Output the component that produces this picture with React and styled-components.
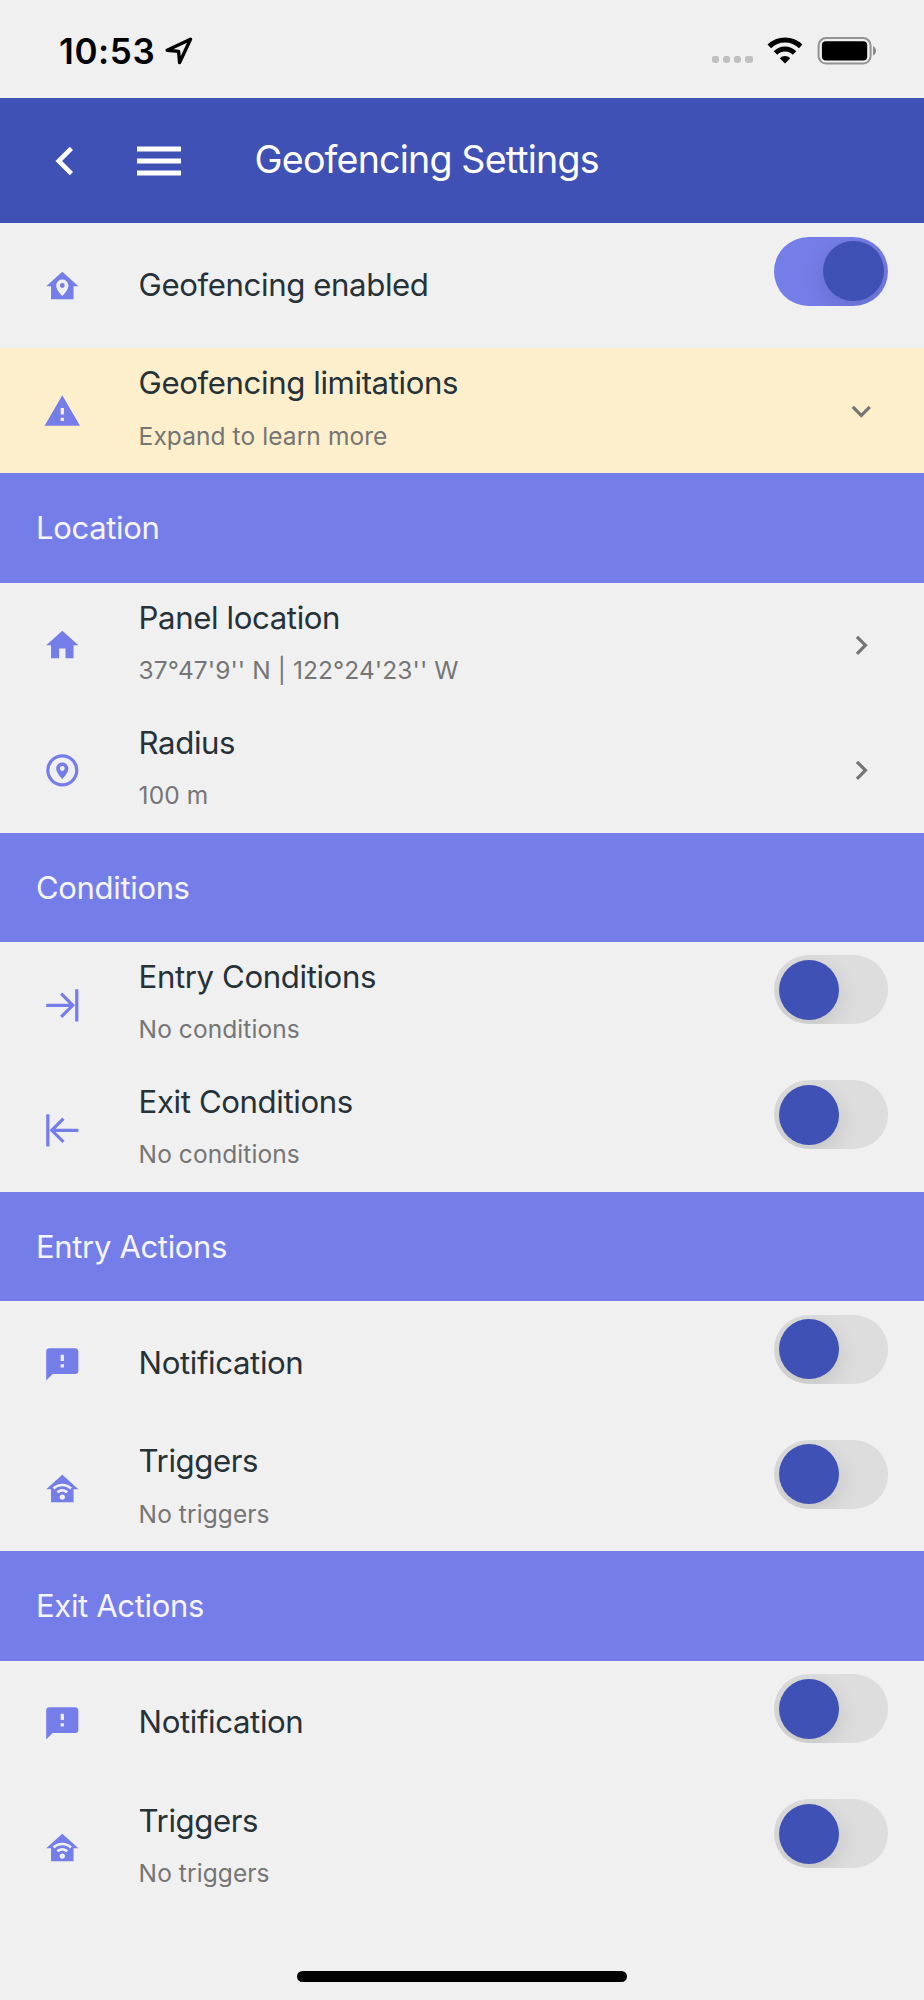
import React from 'react'
import styled, { createGlobalStyle } from 'styled-components'

const GlobalStyle = createGlobalStyle`
  * {
    box-sizing: border-box;
  }
  body {
    margin: 0;
    background-color: #f0f0f0;
    font-family: Inter, "Liberation Sans", sans-serif;
  }
`

const Container = styled.div`
  width: 924px;
  height: 2000px;
  display: flex;
  flex-direction: column;
  overflow: hidden;
  background-color: #f0f0f0;
`

const StatusBar = styled.div`
  height: 98.2px;
  flex-shrink: 0;
  display: flex;
  align-items: center;
  justify-content: space-between;
  padding: 3px 47px 0 59px;
`

const StatusGroup = styled.div`
  display: flex;
  align-items: center;
`

const Time = styled.span`
  font-size: 35px;
  font-weight: 600;
  line-height: 40px;
  letter-spacing: 0.6px;
  color: #000;
  margin-right: 9.5px;
`

const Signal = styled.div`
  display: flex;
  gap: 3.4px;
  margin: 18px 14.5px 0 0;
`

const SignalDot = styled.span`
  width: 7.7px;
  height: 7.3px;
  border-radius: 2.4px;
  background-color: #c0c0c0;
`

const Header = styled.header`
  height: 125px;
  flex-shrink: 0;
  display: flex;
  align-items: center;
  padding-left: 55px;
  background-color: #3f51b5;
`

const HeaderTitle = styled.h1`
  margin: 0 0 1px 74px;
  font-size: 37.6px;
  font-weight: 400;
  line-height: 48px;
  letter-spacing: -0.82px;
  color: #fff;
`

const SectionTitle = styled.h2`
  height: 109.36px;
  flex-shrink: 0;
  margin: 0;
  padding-left: 36px;
  font-size: 31px;
  font-weight: 400;
  line-height: 109px;
  letter-spacing: -0.33px;
  color: #f5f5fb;
  background-color: #757de8;
`

const Row = styled.div`
  height: 125px;
  flex-shrink: 0;
  display: flex;
  align-items: center;
  padding: 0 36px 0 43px;
  background-color: ${props => props.$warning ? "#feefcc" : "transparent"};
`

const RowIcon = styled.svg`
  width: 38.6px;
  height: 38.6px;
  flex-shrink: 0;
  margin-top: 1px;
  fill: #757de8;
`

const RowText = styled.div`
  flex: 1;
  margin-left: 57px;
`

const Title = styled.div`
  margin-bottom: 2px;
  font-size: 31.2px;
  line-height: 40px;
  letter-spacing: -0.4px;
  color: #263238;
`

const Subtitle = styled.div`
  margin: 15.5px 0 5.5px;
  font-size: 24.5px;
  line-height: 34px;
  letter-spacing: 0.08px;
  color: #757575;
`

const Chevron = styled.svg`
  width: 38.6px;
  height: 38.6px;
  margin: 1px 7.5px 0 0;
  fill: #757575;
`

const Toggle = styled.div`
  width: 114px;
  height: 69.2px;
  align-self: flex-start;
  display: flex;
  justify-content: ${props => props.$on ? "flex-end" : "flex-start"};
  margin-top: 13.4px;
  padding: 4.5px 4.5px 4.5px 4.9px;
  border-radius: 35px;
  overflow: hidden;
  background-color: ${props => props.$on ? "#757de8" : "#dddddd"};
`

const Thumb = styled.div`
  width: 60.3px;
  height: 60.3px;
  border-radius: 50%;
  background-color: #3f51b5;
  box-shadow: 0 6.7px 22px rgba(0, 0, 0, 0.12);
`

const Footer = styled.div`
  flex: 1;
  display: flex;
  align-items: flex-end;
  justify-content: center;
  padding-bottom: 18px;
`

const HomeIndicator = styled.div`
  width: 330px;
  height: 11px;
  border-radius: 6px;
  background-color: #000;
`

const icons = {
  homeMarker: "M12,3L2,12H5V20H19V12H22L12,3M12,7.7C14.1,7.7 15.8,9.4 15.8,11.5C15.8,14.5 12,18 12,18C12,18 8.2,14.5 8.2,11.5C8.2,9.4 9.9,7.7 12,7.7M12,10A1.5,1.5 0 0,0 10.5,11.5A1.5,1.5 0 0,0 12,13A1.5,1.5 0 0,0 13.5,11.5A1.5,1.5 0 0,0 12,10Z",
  alert: "M13,14H11V10H13M13,18H11V16H13M1,21H23L12,2L1,21Z",
  home: "M10,20V14H14V20H19V12H22L12,3L2,12H5V20H10Z",
  radius: "M12,2A10,10 0 0,0 2,12A10,10 0 0,0 12,22A10,10 0 0,0 22,12A10,10 0 0,0 12,2M12,4A8,8 0 0,1 20,12A8,8 0 0,1 12,20A8,8 0 0,1 4,12A8,8 0 0,1 12,4M12,7.1C9.9,7.1 8.2,8.8 8.2,10.9C8.2,13.8 12,17.4 12,17.4C12,17.4 15.8,13.8 15.8,10.9C15.8,8.8 14.1,7.1 12,7.1M12,9.4A1.5,1.5 0 0,1 13.5,10.9A1.5,1.5 0 0,1 12,12.4A1.5,1.5 0 0,1 10.5,10.9A1.5,1.5 0 0,1 12,9.4Z",
  entry: "M19.92,12L12,19.92L10.59,18.5L16.17,13H2V11H16.17L10.59,5.5L12,4.08L19.92,12M20,2H22V22H20V2Z",
  exit: "M4.08,12L12,19.92L13.41,18.5L7.83,13H22V11H7.83L13.41,5.5L12,4.08L4.08,12M4,2H2V22H4V2Z",
  message: "M13,10H11V6H13M13,14H11V12H13M20,2H4A2,2 0 0,0 2,4V22L6,18H20A2,2 0 0,0 22,16V4C22,2.89 21.1,2 20,2Z",
  homeWifi: "M12,3L2,12H5V20H19V12H22L12,3M12,8.5C14.34,8.5 16.46,9.43 18,10.94L16.8,12.12C15.58,10.91 13.88,10.17 12,10.17C10.12,10.17 8.42,10.91 7.2,12.12L6,10.94C7.54,9.43 9.66,8.5 12,8.5M12,11.83C13.4,11.83 14.67,12.39 15.6,13.3L14.4,14.47C13.79,13.87 12.94,13.5 12,13.5C11.06,13.5 10.21,13.87 9.6,14.47L8.4,13.3C9.33,12.39 10.6,11.83 12,11.83M12,15.17C12.94,15.17 13.7,15.91 13.7,16.83C13.7,17.76 12.94,18.5 12,18.5C11.06,18.5 10.3,17.76 10.3,16.83C10.3,15.91 11.06,15.17 12,15.17Z",
  down: "M7.41,8.58L12,13.17L16.59,8.58L18,10L12,16L6,10L7.41,8.58Z",
  right: "M8.59,16.58L13.17,12L8.59,7.41L10,6L16,12L10,18L8.59,16.58Z",
}

const sections = [
  {
    rows: [
      { icon: "homeMarker", title: "Geofencing enabled", toggle: true, on: true },
      { icon: "alert", title: "Geofencing limitations", subtitle: "Expand to learn more", chevron: "down", warning: true },
    ],
  },
  {
    name: "Location",
    rows: [
      { icon: "home", title: "Panel location", subtitle: "37°47'9'' N | 122°24'23'' W", chevron: "right" },
      { icon: "radius", title: "Radius", subtitle: "100 m", chevron: "right" },
    ],
  },
  {
    name: "Conditions",
    rows: [
      { icon: "entry", title: "Entry Conditions", subtitle: "No conditions", toggle: true },
      { icon: "exit", title: "Exit Conditions", subtitle: "No conditions", toggle: true },
    ],
  },
  {
    name: "Entry Actions",
    rows: [
      { icon: "message", title: "Notification", toggle: true },
      { icon: "homeWifi", title: "Triggers", subtitle: "No triggers", toggle: true },
    ],
  },
  {
    name: "Exit Actions",
    rows: [
      { icon: "message", title: "Notification", toggle: true },
      { icon: "homeWifi", title: "Triggers", subtitle: "No triggers", toggle: true },
    ],
  },
]

const SettingsRow = ({ row }) => {
  return (
    <Row $warning={row.warning}>
      <RowIcon viewBox="0 0 24 24">
        <path fillRule="evenodd" d={icons[row.icon]} />
      </RowIcon>
      <RowText>
        <Title>{row.title}</Title>
        {row.subtitle && <Subtitle>{row.subtitle}</Subtitle>}
      </RowText>
      {row.chevron && (
        <Chevron viewBox="0 0 24 24">
          <path d={icons[row.chevron]} />
        </Chevron>
      )}
      {row.toggle && (
        <Toggle $on={row.on}>
          <Thumb />
        </Toggle>
      )}
    </Row>
  )
}

const MenuIcon = styled.svg`
  margin-left: 63.6px;
`

const BatteryIcon = styled.svg`
  margin-left: 14px;
`

const App = () => {
  return (
    <Container>
      <GlobalStyle />
      <StatusBar>
        <StatusGroup>
          <Time>10:53</Time>
          <svg width="28" height="28" viewBox="0 0 28 28" fill="none" stroke="#000" strokeWidth="3.4" strokeLinejoin="round">
            <path d="M25.5 2.2L2.2 13.2L13.6 14.4L14.6 25.6Z" />
          </svg>
        </StatusGroup>
        <StatusGroup>
          <Signal>
            <SignalDot />
            <SignalDot />
            <SignalDot />
            <SignalDot />
          </Signal>
          <svg width="36" height="27" viewBox="0 0 36 27" fill="none" stroke="#000" strokeWidth="5">
            <path d="M2.3 9.4A22.4 22.4 0 0 1 33.7 9.4" />
            <path d="M8.5 15.9A13.4 13.4 0 0 1 27.5 15.9" />
            <path d="M18 26.5L12.8 21.2A7.4 7.4 0 0 1 23.2 21.2Z" fill="#000" stroke="none" />
          </svg>
          <BatteryIcon width="60" height="28" viewBox="0 0 60 28">
            <rect x="1.6" y="1" width="52" height="25.6" rx="7.5" fill="none" stroke="#929292" strokeWidth="2" />
            <rect x="4.9" y="4.2" width="45.3" height="19.2" rx="4" />
            <path d="M56 9.1C60 10.8 60 16.8 56 18.5Z" fill="#8b8b8b" />
          </BatteryIcon>
        </StatusGroup>
      </StatusBar>
      <Header>
        <svg width="18" height="30" viewBox="0 0 18 30" fill="none" stroke="#fff" strokeWidth="4.6">
          <path d="M16.4 2.3L3.7 15L16.4 27.7" />
        </svg>
        <MenuIcon width="44" height="30" viewBox="0 0 44 30" fill="#fff">
          <path d="M0 0.6H44V5.4H0ZM0 12.6H44V17.4H0ZM0 24.6H44V29.4H0Z" />
        </MenuIcon>
        <HeaderTitle>Geofencing Settings</HeaderTitle>
      </Header>
      {sections.map((section, i) => (
        <React.Fragment key={i}>
          {section.name && <SectionTitle>{section.name}</SectionTitle>}
          {section.rows.map((row, j) => <SettingsRow key={j} row={row} />)}
        </React.Fragment>
      ))}
      <Footer>
        <HomeIndicator />
      </Footer>
    </Container>
  )
}

export default App
